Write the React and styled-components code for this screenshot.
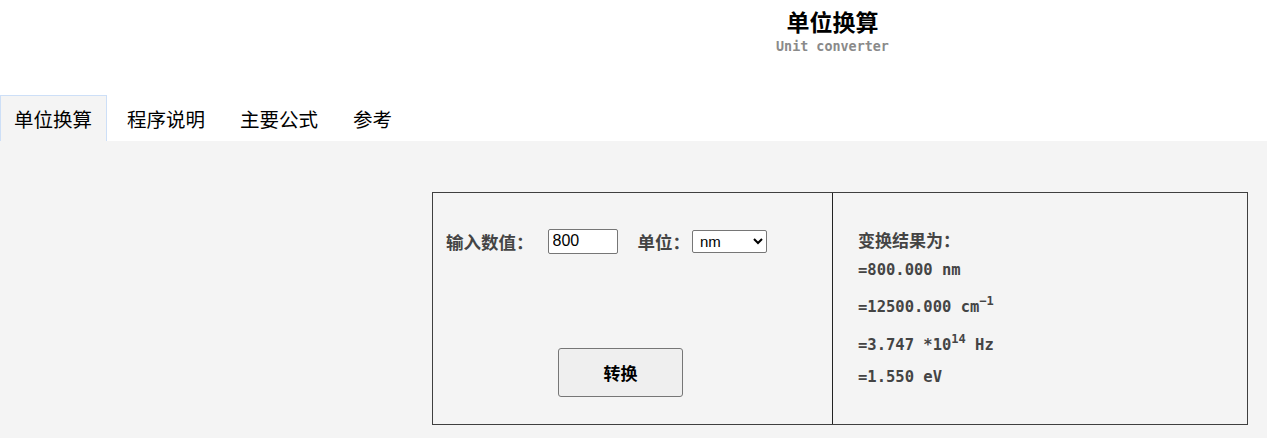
import styled, { createGlobalStyle } from "styled-components";

const Global = createGlobalStyle`
  html, body {
    margin: 0;
    padding: 0;
    background: #ffffff;
    font-family: "Liberation Sans", "Noto Sans CJK SC", sans-serif;
  }
`;

const Page = styled.div`
  width: 1267px;
  height: 438px;
  overflow: hidden;
  display: flex;
  flex-direction: column;
`;

const Header = styled.header`
  padding: 6px 0 0 398px;
  height: 95px;
  box-sizing: border-box;
  text-align: center;
`;

const Title = styled.h1`
  margin: 0;
  font-size: 23px;
  line-height: 31px;
  font-weight: 700;
  color: #000;
  font-family: "Noto Sans CJK SC", sans-serif;
`;

const Subtitle = styled.div`
  font-family: "DejaVu Sans Mono", "Liberation Mono", monospace;
  font-size: 13.4px;
  font-weight: 700;
  line-height: 20px;
  color: #8a8a8a;
`;

const Tabs = styled.nav`
  display: flex;
  gap: 6px;
  height: 46px;
  align-items: stretch;
`;

const Tab = styled.div`
  padding: 0 14px 0 13px;
  display: flex;
  align-items: center;
  font-family: "Noto Sans CJK SC", sans-serif;
  font-size: 19.5px;
  color: #000;
  box-sizing: border-box;
  border: 1px solid ${(p) => (p.active ? "#cddff7" : "transparent")};
  border-bottom: none;
  background: ${(p) => (p.active ? "#f4f4f4" : "#fff")};
`;

const Content = styled.main`
  flex: 1;
  background: #f4f4f4;
  padding: 51px 0 0 432px;
`;

const Box = styled.section`
  width: 816px;
  height: 233px;
  box-sizing: border-box;
  border: 1px solid #3f3f3f;
  display: grid;
  grid-template-columns: 400px 1fr;
`;

const LeftPanel = styled.div`
  border-right: 1px solid #222;
  display: flex;
  flex-direction: column;
  padding: 35px 0 0 13px;
`;

const Row = styled.div`
  display: flex;
  align-items: center;
  height: 26px;
`;

const Label = styled.label`
  font-family: "Noto Sans CJK SC", sans-serif;
  font-weight: 700;
  font-size: 17.5px;
  color: #444;
  margin-right: ${(p) => p.gap}px;
`;

const NumInput = styled.input`
  width: 70px;
  height: 25px;
  box-sizing: border-box;
  border: 1px solid #767676;
  border-radius: 2px;
  padding: 1px 4px;
  font-family: "Liberation Sans", sans-serif;
  font-size: 16px;
  color: #000;
  margin-right: 20px;
  background: #fff;
`;

const Select = styled.select`
  width: 75px;
  height: 23px;
  box-sizing: border-box;
  border: 1px solid #767676;
  border-radius: 2px;
  font-family: "Liberation Sans", sans-serif;
  font-size: 15px;
  padding: 0 3px;
  background: #fff;
  color: #000;
`;

const Button = styled.button`
  align-self: flex-start;
  margin: 94px 0 0 112px;
  width: 125px;
  height: 49px;
  background: #efefef;
  border: 1px solid #767676;
  border-radius: 3px;
  font-family: "Noto Sans CJK SC", sans-serif;
  font-weight: 700;
  font-size: 17px;
  color: #000;
`;

const RightPanel = styled.div`
  padding: 37px 0 0 25px;
  font-family: "DejaVu Sans Mono", "Noto Sans CJK SC", monospace;
  font-weight: 700;
  font-size: 15.5px;
  color: #444;
`;

const Line = styled.div`
  line-height: 20px;
  font-size: ${(p) => (p.heading ? "17px" : "inherit")};
  font-family: ${(p) => (p.heading ? '"Noto Sans CJK SC", sans-serif' : "inherit")};
  margin-bottom: ${(p) => p.mb}px;
  sup {
    font-size: 12px;
    line-height: 0;
    vertical-align: 7px;
  }
`;

export default function App() {
  return (
    <Page>
      <Global />
      <Header>
        <Title>单位换算</Title>
        <Subtitle>Unit converter</Subtitle>
      </Header>
      <Tabs>
        <Tab active>单位换算</Tab>
        <Tab>程序说明</Tab>
        <Tab>主要公式</Tab>
        <Tab>参考</Tab>
      </Tabs>
      <Content>
        <Box>
          <LeftPanel>
            <Row>
              <Label gap={14}>输入数值：</Label>
              <NumInput defaultValue="800" />
              <Label gap={2}>单位：</Label>
              <Select defaultValue="nm">
                <option value="nm">nm</option>
                <option value="cm">cm-1</option>
                <option value="hz">Hz</option>
                <option value="ev">eV</option>
              </Select>
            </Row>
            <Button>转换</Button>
          </LeftPanel>
          <RightPanel>
            <Line heading mb={10}>变换结果为：</Line>
            <Line mb={17}>=800.000 nm</Line>
            <Line mb={18}>
              =12500.000 cm<sup>−1</sup>
            </Line>
            <Line mb={12}>
              =3.747 *10<sup>14</sup> Hz
            </Line>
            <Line mb={0}>=1.550 eV</Line>
          </RightPanel>
        </Box>
      </Content>
    </Page>
  );
}
